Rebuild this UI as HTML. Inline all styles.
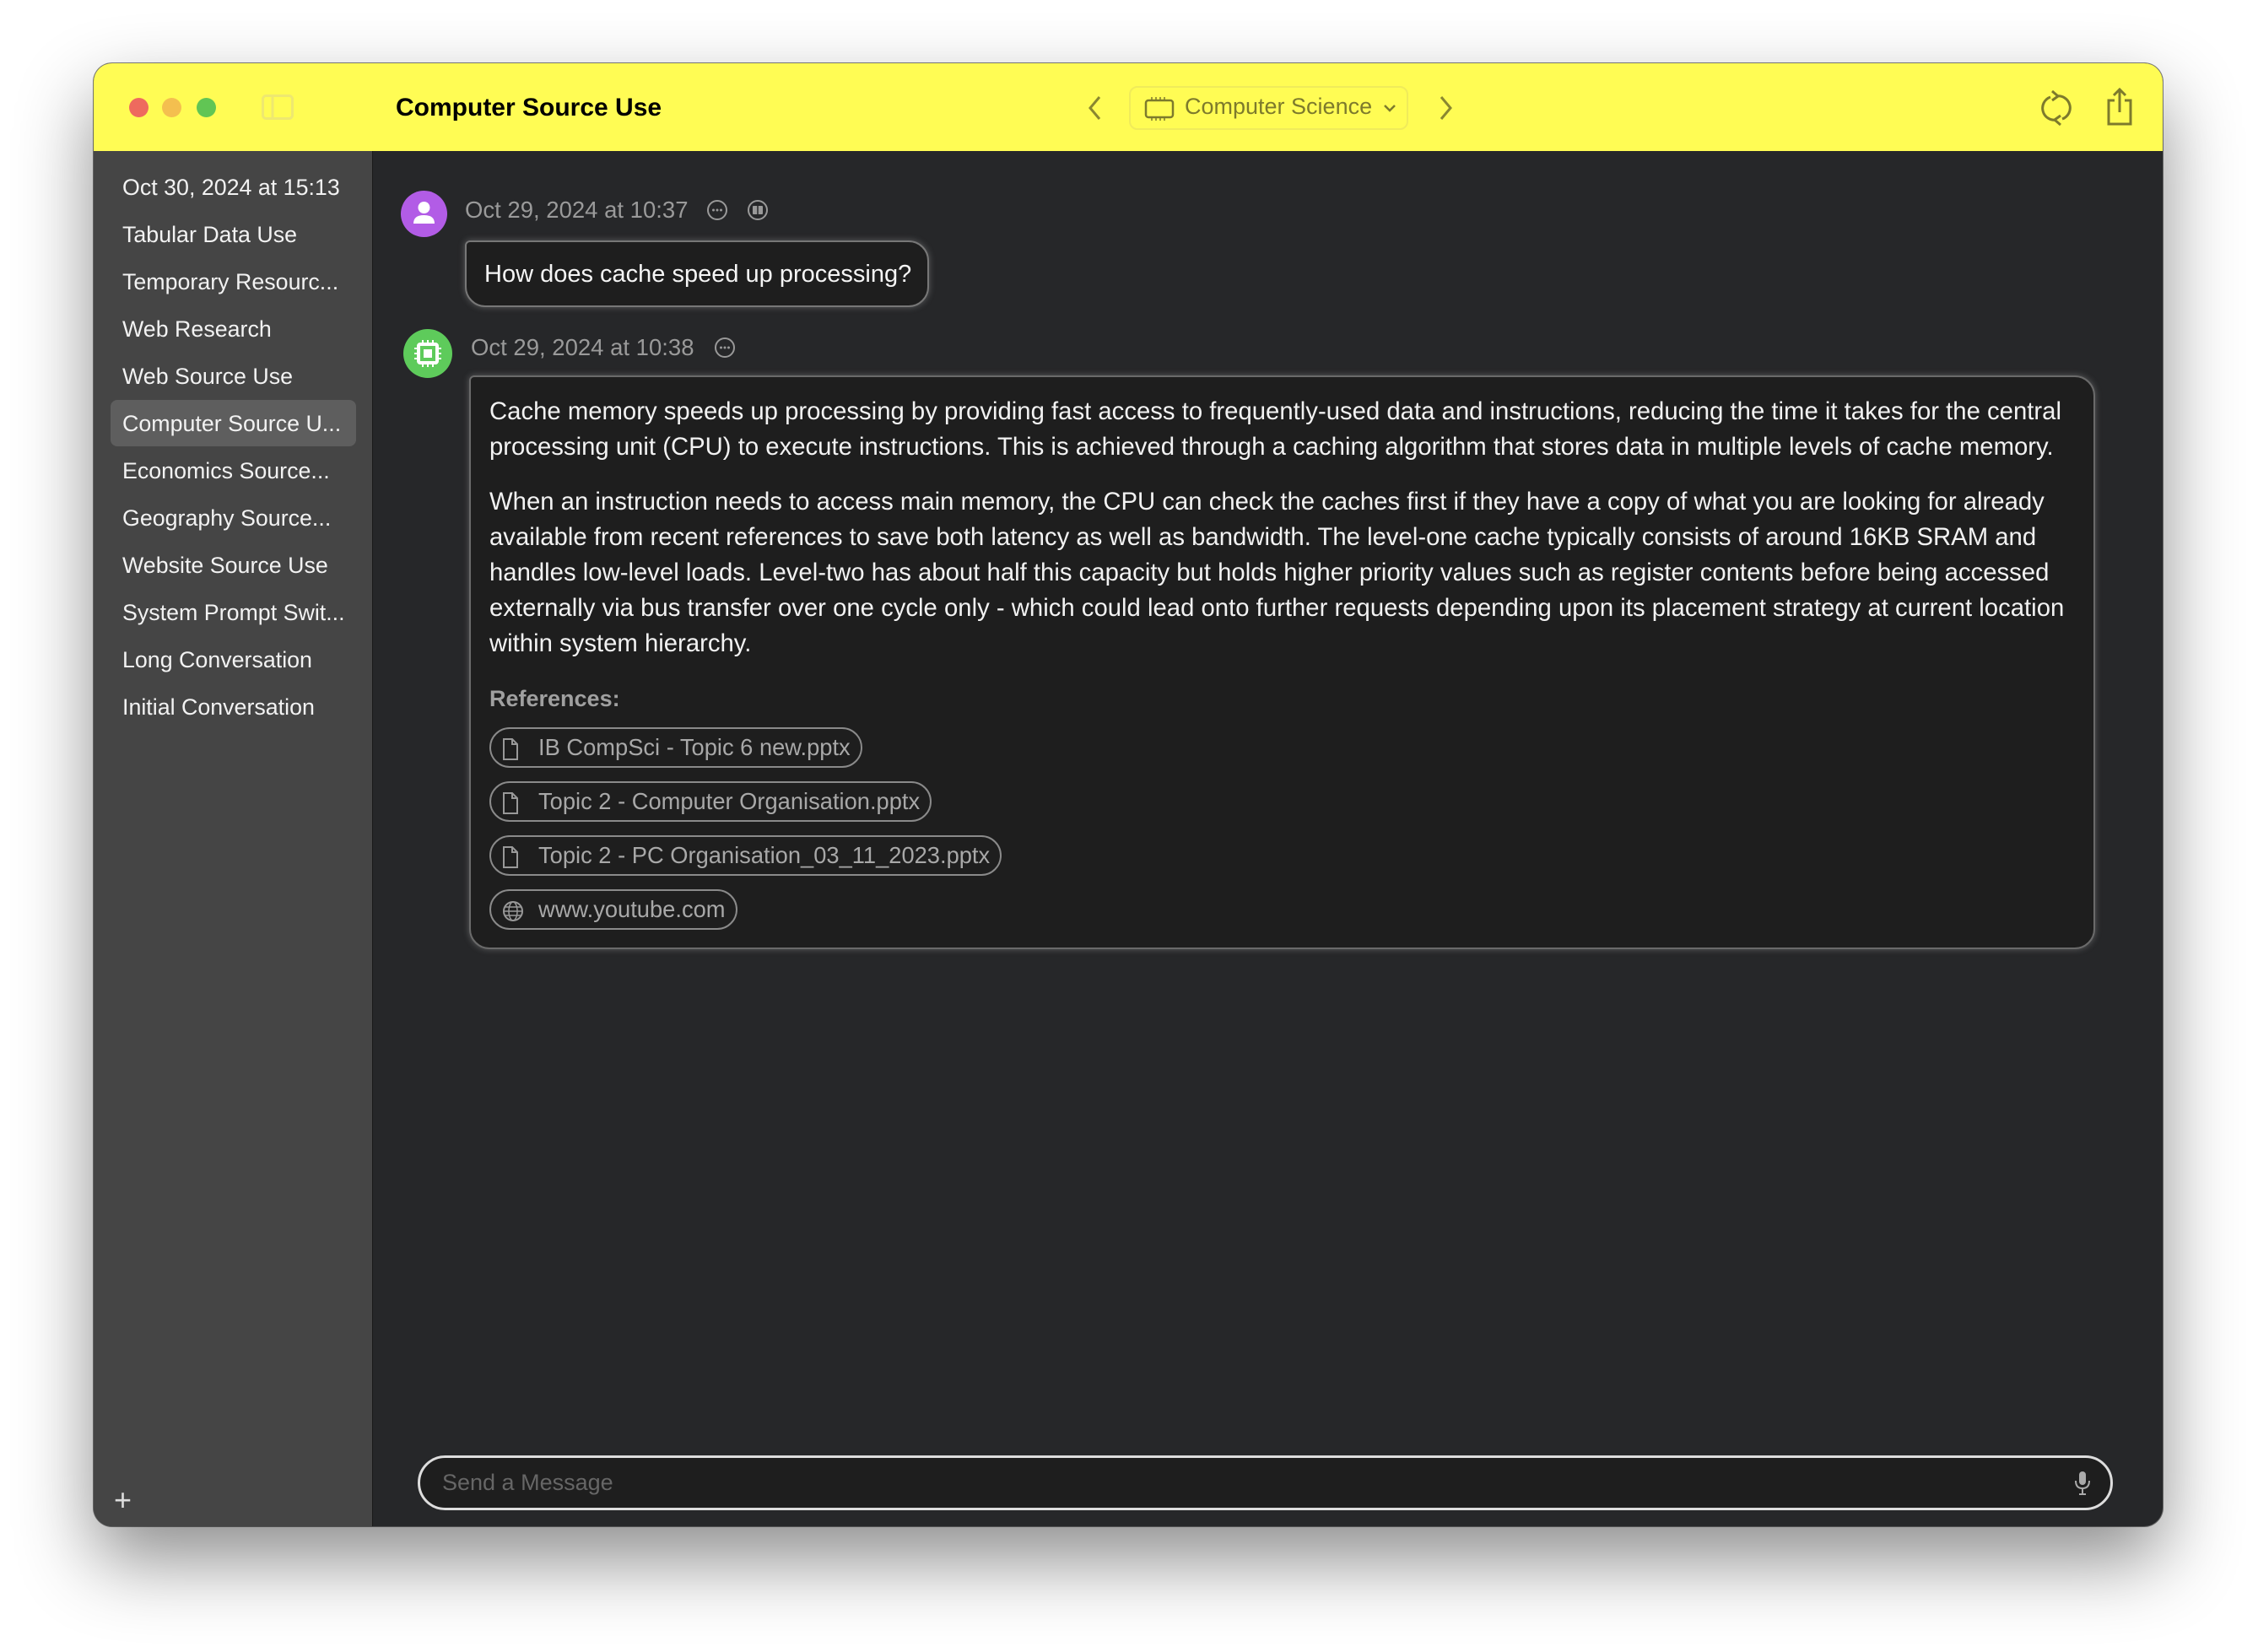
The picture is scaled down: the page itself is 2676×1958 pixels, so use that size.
<!DOCTYPE html>
<html><head><meta charset="utf-8"><style>
*{margin:0;padding:0;box-sizing:border-box}
body{width:2676px;height:1958px;background:#fff;font-family:"Liberation Sans",sans-serif;position:relative;overflow:hidden}
.win{position:absolute;left:111px;top:75px;width:2452px;height:1734px;border-radius:22px;overflow:hidden;background:#262729;box-shadow:0 40px 90px rgba(0,0,0,.45),0 0 0 1px rgba(0,0,0,.5)}
.tb{position:absolute;left:0;top:0;width:100%;height:104px;background:#fffc54}
.dot{position:absolute;top:41px;width:23px;height:23px;border-radius:50%}
.side{position:absolute;left:0;top:104px;width:331px;bottom:0;background:#454545;border-right:1px solid #1a1a1a}
.si{position:absolute;left:34px;font-size:26.8px;color:#f2f2f2;white-space:nowrap}
.sel{position:absolute;left:20px;top:370px;width:291px;height:55px;background:#5e5e5e;border-radius:8px}
.abs{position:absolute;white-space:nowrap}
.ts{font-size:27.5px;color:#9a9a9a}
.body{font-size:29.3px;color:#f2f2f2;line-height:42px}
.chip{position:absolute;left:580px;height:48px;border:2px solid #8a8a8a;border-radius:24px;color:#a8a8a8;font-size:27.3px;line-height:44px;padding-left:56px;padding-right:12px;white-space:nowrap}
.chip svg{position:absolute;left:12px;top:10px}
</style></head><body>
<div class="win">
 <div class="tb">
  <div class="dot" style="left:42px;background:#ee6a5e"></div>
  <div class="dot" style="left:81px;background:#f4bf4f"></div>
  <div class="dot" style="left:122px;background:#61c554"></div>
  <svg class="abs" style="left:199px;top:37px" width="38" height="30"><rect x="1.5" y="1.5" width="35" height="27" rx="4" fill="none" stroke="#eee870" stroke-width="3"/><line x1="13" y1="2" x2="13" y2="28" stroke="#eee870" stroke-width="3"/></svg>
  <div class="abs" style="left:358px;top:36px;font-size:30px;font-weight:bold;color:#000">Computer Source Use</div>
  <svg class="abs" style="left:1176px;top:37px" width="22" height="32"><path d="M16 3 L5 16 L16 29" fill="none" stroke="#8a8730" stroke-width="3"/></svg>
  <div class="abs" style="left:1227px;top:27px;width:331px;height:52px;border:2px solid #f0eb5a;border-radius:10px"></div>
  <svg class="abs" style="left:1245px;top:40px" width="36" height="28"><rect x="2" y="4" width="32" height="20" rx="3" fill="none" stroke="#7d7a2c" stroke-width="2.5"/><path d="M9 0v4M14 0v4M19 0v4M24 0v4M9 24v4M14 24v4M19 24v4M24 24v4" stroke="#7d7a2c" stroke-width="1.5"/></svg>
  <div class="abs" style="left:1293px;top:36px;font-size:27px;color:#7d7a2c">Computer Science</div>
  <svg class="abs" style="left:1528px;top:47px" width="16" height="12"><path d="M2 3 L8 9 L14 3" fill="none" stroke="#7d7a2c" stroke-width="2.5"/></svg>
  <svg class="abs" style="left:1591px;top:37px" width="22" height="32"><path d="M6 3 L17 16 L6 29" fill="none" stroke="#8a8730" stroke-width="3"/></svg>
  <svg class="abs" style="left:2307px;top:30px" width="38" height="46"><path d="M12 10 A14 14 0 0 0 19 37 M26 36 A14 14 0 0 0 19 9" fill="none" stroke="#7d7a2c" stroke-width="3"/><path d="M14 3 L21 9 L14 14" fill="none" stroke="#7d7a2c" stroke-width="3"/><path d="M24 32 L17 37 L24 43" fill="none" stroke="#7d7a2c" stroke-width="3"/></svg>
  <svg class="abs" style="left:2384px;top:28px" width="34" height="48"><path d="M11 16 H4 V44 H30 V16 H23" fill="none" stroke="#7d7a2c" stroke-width="3"/><path d="M17 30 V3 M10 10 L17 3 L24 10" fill="none" stroke="#7d7a2c" stroke-width="3"/></svg>
 </div>
 <div class="side">
  <div class="sel" style="top:295px"></div>
  <div class="si" style="top:28px">Oct 30, 2024 at 15:13</div>
  <div class="si" style="top:84px">Tabular Data Use</div>
  <div class="si" style="top:140px">Temporary Resourc...</div>
  <div class="si" style="top:196px">Web Research</div>
  <div class="si" style="top:252px">Web Source Use</div>
  <div class="si" style="top:308px">Computer Source U...</div>
  <div class="si" style="top:364px">Economics Source...</div>
  <div class="si" style="top:420px">Geography Source...</div>
  <div class="si" style="top:476px">Website Source Use</div>
  <div class="si" style="top:532px">System Prompt Swit...</div>
  <div class="si" style="top:588px">Long Conversation</div>
  <div class="si" style="top:644px">Initial Conversation</div>
  <div class="si" style="top:1578px;font-size:36px;left:24px;color:#ddd">+</div>
 </div>
 <div class="abs" style="left:364px;top:151px;width:55px;height:55px;border-radius:50%;background:#b25ce6"></div>
 <svg class="abs" style="left:364px;top:151px" width="55" height="55"><circle cx="27.5" cy="20" r="7" fill="#fff"/><path d="M15 39 Q15 29 27.5 29 Q40 29 40 39 Z" fill="#fff"/></svg>
 <div class="abs ts" style="left:440px;top:158px">Oct 29, 2024 at 10:37</div>
 <svg class="abs" style="left:726px;top:161px" width="26" height="26"><circle cx="13" cy="13" r="11" fill="none" stroke="#999" stroke-width="2"/><circle cx="8.5" cy="13" r="1.5" fill="#999"/><circle cx="13" cy="13" r="1.5" fill="#999"/><circle cx="17.5" cy="13" r="1.5" fill="#999"/></svg>
 <svg class="abs" style="left:774px;top:161px" width="26" height="26"><circle cx="13" cy="13" r="11" fill="none" stroke="#999" stroke-width="2"/><rect x="7" y="8" width="12" height="10" rx="1" fill="#999"/><line x1="13" y1="8" x2="13" y2="18" stroke="#262729" stroke-width="1.5"/></svg>
 <div class="abs" style="left:440px;top:210px;width:550px;height:79px;background:#1e1e1e;border:2px solid #777;border-radius:6px 24px 24px 24px;box-shadow:0 0 8px rgba(200,200,200,.35)"></div>
 <div class="abs" style="left:463px;top:234px;font-size:29px;color:#f5f5f5">How does cache speed up processing?</div>

 <div class="abs" style="left:367px;top:315px;width:58px;height:58px;border-radius:50%;background:#5ecb5b"></div>
 <svg class="abs" style="left:367px;top:315px" width="58" height="58"><rect x="18" y="18" width="22" height="22" rx="2" fill="none" stroke="#fff" stroke-width="4"/><rect x="24" y="24" width="10" height="10" fill="#fff"/><path d="M23 13v5M29 13v5M35 13v5M23 40v5M29 40v5M35 40v5M13 23h5M13 29h5M13 35h5M40 23h5M40 29h5M40 35h5" stroke="#fff" stroke-width="2"/></svg>
 <div class="abs ts" style="left:447px;top:321px">Oct 29, 2024 at 10:38</div>
 <svg class="abs" style="left:846px;top:324px" width="26" height="26" style=""></svg>
 <svg class="abs" style="left:846px;top:324px" width="26" height="26"></svg>
 <svg class="abs" style="left:846px;top:324px" width="26" height="26"></svg>
 <svg class="abs" style="left:846px;top:324px" width="1" height="1"></svg>
 <svg class="abs" style="left:846px;top:324px" width="1" height="1"></svg>
 <svg class="abs" style="left:846px;top:324px" width="1" height="1"></svg>
 <svg class="abs" style="left:846px;top:324px" width="1" height="1"></svg>
 <svg class="abs" style="left:735px;top:324px" width="26" height="26"><circle cx="13" cy="13" r="11" fill="none" stroke="#999" stroke-width="2"/><circle cx="8.5" cy="13" r="1.5" fill="#999"/><circle cx="13" cy="13" r="1.5" fill="#999"/><circle cx="17.5" cy="13" r="1.5" fill="#999"/></svg>

 <div class="abs" style="left:445px;top:370px;width:1927px;height:680px;background:#1e1e1e;border:2px solid #6a6a6a;border-radius:6px 24px 24px 24px;box-shadow:0 0 8px rgba(200,200,200,.35)"></div>
 <div class="abs body" style="left:469px;top:392px">Cache memory speeds up processing by providing fast access to frequently-used data and instructions, reducing the time it takes for the central<br>processing unit (CPU) to execute instructions. This is achieved through a caching algorithm that stores data in multiple levels of cache memory.</div>
 <div class="abs body" style="left:469px;top:499px">When an instruction needs to access main memory, the CPU can check the caches first if they have a copy of what you are looking for already<br>available from recent references to save both latency as well as bandwidth. The level-one cache typically consists of around 16KB SRAM and<br>handles low-level loads. Level-two has about half this capacity but holds higher priority values such as register contents before being accessed<br>externally via bus transfer over one cycle only - which could lead onto further requests depending upon its placement strategy at current location<br>within system hierarchy.</div>
 <div class="abs" style="left:469px;top:738px;font-size:27px;font-weight:bold;color:#a0a0a0">References:</div>
 <div class="chip" style="left:469px;top:787px">IB CompSci - Topic 6 new.pptx<svg width="22" height="28"><path d="M3 2 H13 L19 8 V26 H3 Z M13 2 V8 H19" fill="none" stroke="#999" stroke-width="2"/></svg></div>
 <div class="chip" style="left:469px;top:851px">Topic 2 - Computer Organisation.pptx<svg width="22" height="28"><path d="M3 2 H13 L19 8 V26 H3 Z M13 2 V8 H19" fill="none" stroke="#999" stroke-width="2"/></svg></div>
 <div class="chip" style="left:469px;top:915px">Topic 2 - PC Organisation_03_11_2023.pptx<svg width="22" height="28"><path d="M3 2 H13 L19 8 V26 H3 Z M13 2 V8 H19" fill="none" stroke="#999" stroke-width="2"/></svg></div>
 <div class="chip" style="left:469px;top:979px">www.youtube.com<svg width="28" height="28"><circle cx="14" cy="14" r="11" fill="none" stroke="#999" stroke-width="2"/><ellipse cx="14" cy="14" rx="5" ry="11" fill="none" stroke="#999" stroke-width="1.5"/><path d="M3 14h22M5 9h18M5 19h18" stroke="#999" stroke-width="1.5"/></svg></div>

 <div class="abs" style="left:384px;top:1650px;width:2009px;height:65px;background:#1e1e1e;border:3px solid #ddd;border-radius:33px"></div>
 <div class="abs" style="left:413px;top:1667px;font-size:27px;color:#666">Send a Message</div>
 <svg class="abs" style="left:2346px;top:1667px" width="22" height="32"><rect x="7" y="2" width="8" height="16" rx="4" fill="#aaa"/><path d="M3 13 Q3 22 11 22 Q19 22 19 13 M11 22 V29 M7 29 H15" fill="none" stroke="#aaa" stroke-width="2"/></svg>
</div>
</body></html>
